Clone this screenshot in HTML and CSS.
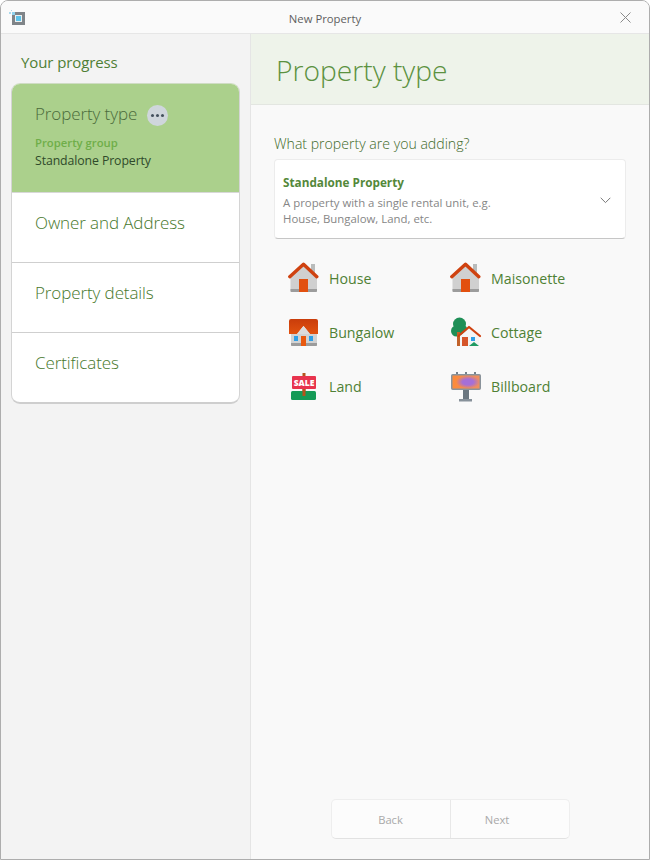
FILE: index.html
```html
<!DOCTYPE html>
<html lang="en">
<head>
<meta charset="utf-8">
<title>New Property</title>
<link rel="stylesheet" href="styles.css">
</head>
<body>
<div class="window">
  <header class="titlebar">
    <svg class="app-icon" width="18" height="16" viewBox="0 0 18 16"><rect x="3" y="2" width="13" height="13" fill="#7f8488"/><rect x="6" y="5" width="7" height="7" fill="#e9eef0"/><rect x="7" y="6" width="5" height="5" fill="#5cc3ea"/><rect x="0" y="2" width="2" height="2" fill="#a9d8ec"/><rect x="2" y="0" width="1" height="1" fill="#a9d8ec"/><rect x="3" y="2" width="3" height="3" fill="#8fd2ee"/></svg>
    <span class="title">New Property</span>
    <svg class="close" width="11" height="11" viewBox="0 0 11 11"><path d="M.5.5l10 10M10.500.5l-10 10" stroke="#8a8a8a" stroke-width="1" fill="none"/></svg>
  </header>
  <div class="body">
    <aside class="sidebar">
      <div class="progress-label">Your progress</div>
      <nav class="steps">
        <div class="step step-active">
          <div class="step-head"><span class="step-name">Property type</span><span class="dots"><i></i><i></i><i></i></span></div>
          <div class="step-sub">Property group</div>
          <div class="step-value">Standalone Property</div>
        </div>
        <div class="step"><span class="step-name">Owner and Address</span></div>
        <div class="step"><span class="step-name">Property details</span></div>
        <div class="step step-last"><span class="step-name">Certificates</span></div>
      </nav>
    </aside>
    <main class="main">
      <div class="page-head">Property type</div>
      <div class="content">
        <div class="question">What property are you adding?</div>
        <div class="select">
          <div>
            <div class="select-title">Standalone Property</div>
            <div class="select-desc">A property with a single rental unit, e.g.<br>House, Bungalow, Land, etc.</div>
          </div>
          <svg class="chevron" width="11" height="7" viewBox="0 0 11 7"><path d="M.7.8l4.800 4.800L10.300.8" stroke="#777" fill="none"/></svg>
        </div>
        <div class="types">
          <div class="type">
            <svg class="type-icon" width="32" height="32" viewBox="0 0 32 32"><path d="M23 2h4v10h-4z" fill="#b9bcbc"/><path d="M2.500 15L15.500 3 29 15v14a1 1 0 0 1-1 1H3.500a1 1 0 0 1-1-1z" fill="#d0d0d0"/><path d="M2.500 27H29v2a1 1 0 0 1-1 1H3.500a1 1 0 0 1-1-1z" fill="#9c9c9c"/><path d="M11 17h9v13h-9z" fill="#e2500f"/><path d="M1.800 14.700L15.500 2.200l13.300 12.500" stroke="#cf4210" stroke-width="3.400" fill="none" stroke-linecap="round" stroke-linejoin="round"/></svg>
            <span>House</span>
          </div>
          <div class="type">
            <svg class="type-icon" width="32" height="32" viewBox="0 0 32 32"><path d="M23 2h4v10h-4z" fill="#b9bcbc"/><path d="M2.500 15L15.500 3 29 15v14a1 1 0 0 1-1 1H3.500a1 1 0 0 1-1-1z" fill="#d0d0d0"/><path d="M2.500 27H29v2a1 1 0 0 1-1 1H3.500a1 1 0 0 1-1-1z" fill="#9c9c9c"/><path d="M11 17h9v13h-9z" fill="#e2500f"/><path d="M1.800 14.700L15.500 2.200l13.300 12.500" stroke="#cf4210" stroke-width="3.400" fill="none" stroke-linecap="round" stroke-linejoin="round"/></svg>
            <span>Maisonette</span>
          </div>
          <div class="type">
            <svg class="type-icon" width="32" height="32" viewBox="0 0 32 32"><defs><linearGradient id="roof" x1="0" y1="0" x2="0" y2="1"><stop offset="0" stop-color="#c93d0b"/><stop offset="1" stop-color="#e2520f"/></linearGradient></defs><path d="M3 15h26v15H3z" fill="#d2d2d2"/><path d="M3 27h26v2a1 1 0 0 1-1 1H4a1 1 0 0 1-1-1z" fill="#9c9c9c"/><path d="M1 5a2 2 0 0 1 2-2h25a2 2 0 0 1 2 2v13h-8l-6.500-8L9 18H1z" fill="url(#roof)"/><path d="M9 18l6.500-8 6.500 8z" fill="#dcdcdc"/><path d="M13 20h5v10h-5z" fill="#e8590f"/><path d="M6 20h4v5H6zM21 20h4v5h-4z" fill="#2f9fe6"/></svg>
            <span>Bungalow</span>
          </div>
          <div class="type">
            <svg class="type-icon" width="32" height="32" viewBox="0 0 32 32"><circle cx="9.500" cy="8" r="6.500" fill="#1f8f57"/><circle cx="6.500" cy="15" r="5.500" fill="#1f8f57"/><circle cx="12.500" cy="14" r="5" fill="#1f8f57"/><path d="M7 16h3v14H7z" fill="#c1622a"/><path d="M10 20l9-8 10 8v10H10z" fill="#f4f4f4"/><path d="M12 21h6v9h-6z" fill="#d5552a"/><path d="M21 21h4v4h-4z" fill="#2f9fe6"/><path d="M19 30l5-4 5 4z" fill="#1f9a62"/><path d="M8.500 20L19 11l11 9" stroke="#cf4210" stroke-width="2.200" fill="none" stroke-linecap="round" stroke-linejoin="round"/></svg>
            <span>Cottage</span>
          </div>
          <div class="type">
            <svg class="type-icon" width="32" height="32" viewBox="0 0 32 32"><path d="M14.500 3h3v23h-3z" fill="#b5541c"/><rect x="3" y="21" width="25" height="9" rx="1.500" fill="#159a56"/><path d="M14.500 19h3v7h-3z" fill="#b5541c"/><rect x="4" y="6" width="24" height="13" rx="1" fill="#e8344e"/><text x="16" y="15.500" class="sale">SALE</text></svg>
            <span>Land</span>
          </div>
          <div class="type">
            <svg class="type-icon" width="32" height="32" viewBox="0 0 32 32"><defs><linearGradient id="ad" x1="0" y1="0" x2="1" y2="0"><stop offset="0" stop-color="#fd8a38"/><stop offset="1" stop-color="#ee8f62"/></linearGradient><radialGradient id="glow"><stop offset=".45" stop-color="#a56fd8"/><stop offset="1" stop-color="#a56fd8" stop-opacity="0"/></radialGradient></defs><path d="M6 2h2v3H6zM15 2h2v3h-2zM24 2h2v3h-2z" fill="#74808a"/><rect x="1.750" y="4.750" width="28.500" height="14.500" rx="1" fill="url(#ad)" stroke="#8a939b" stroke-width="1.500"/><ellipse cx="18" cy="12" rx="12" ry="6.500" fill="url(#glow)"/><path d="M13 20h6v9h-6z" fill="#6b7780"/><path d="M9 29h13v2.500H9z" fill="#87919a"/></svg>
            <span>Billboard</span>
          </div>
        </div>
        <div class="footer">
          <div class="nav-buttons"><div class="nav-btn nav-btn-back">Back</div><div class="nav-btn nav-btn-next">Next</div></div>
        </div>
      </div>
    </main>
  </div>
</div>
</body>
</html>
```
FILE: styles.css
```css
* { box-sizing: border-box; }
html, body { margin: 0; padding: 0; height: 860px; background: #fff; overflow: hidden; }
body { font-family: "Open Sans", "Noto Sans", sans-serif; color: #333; }
.window { height: 860px; border: 1px solid #adadad; border-radius: 8px 8px 0 0; overflow: hidden; display: flex; flex-direction: column; background: #f9f9f9; }
.titlebar { height: 33px; flex: none; position: relative; display: flex; align-items: center; justify-content: center; background: #fafafa; border-bottom: 1px solid #e6e6e6; }
.app-icon { position: absolute; left: 8px; top: 9px; }
.title { font-size: 11.300px; color: #5f5f5f; position: relative; top: 1px; }
.close { position: absolute; right: 18px; top: 11px; }
.body { flex: 1; display: flex; min-height: 0; }
.sidebar { width: 250px; flex: none; background: #f3f3f3; border-right: 1px solid #e5e5e5; padding: 0 10px; }
.progress-label { font-size: 15px; color: #4f7f35; padding: 18px 0 0 10px; height: 49px; line-height: 21px; letter-spacing: -.1px; }
.steps { background: #fff; border: 1px solid #d4d4d4; border-top-color: #cfdcc4; border-bottom: 2px solid #cecece; border-radius: 9px; overflow: hidden; }
.step { height: 70px; padding: 18px 23px 0; border-bottom: 1px solid #cfcfcf; }
.step-last { border-bottom: none; height: 69px; }
.step-name { font-size: 17px; font-weight: 300; line-height: 24px; color: #47782c; letter-spacing: -.1px; }
.step-active { height: 109px; background: #abd08c; border-bottom-color: #d8d8d8; }
.step-head { display: flex; align-items: center; height: 24px; gap: 10px; }
.step-active .step-name { color: #4a6b3b; }
.dots { width: 21px; height: 21px; border-radius: 50%; background: #cfd6dc; display: flex; align-items: center; justify-content: center; gap: 2px; margin-top: 3px; }
.dots i { width: 3px; height: 3px; border-radius: 50%; background: #44515e; }
.step-sub { font-size: 11.300px; font-weight: 600; color: #6fae49; margin-top: 8px; line-height: 17px; }
.step-value { font-size: 12.300px; color: #2f4a2a; line-height: 17px; margin-top: 1px; letter-spacing: -.1px; }
.main { flex: 1; min-width: 0; display: flex; flex-direction: column; }
.page-head { height: 71px; flex: none; background: #eef3ea; border-bottom: 1px solid #e3e6e1; font-size: 28.200px; font-weight: 300; color: #5b9140; padding: 14px 0 0 25px; line-height: 44px; }
.content { flex: 1; padding: 29px 23px 20px 23px; display: flex; flex-direction: column; }
.question { font-size: 14.100px; font-weight: 300; color: #3f6a2a; line-height: 20px; }
.select { margin-top: 5px; height: 80px; background: #fff; border: 1px solid #ececec; border-bottom: 1px solid #c6c6c6; border-radius: 4px; padding: 14px 14px 0 8px; display: flex; justify-content: space-between; }
.select-title { font-size: 11.750px; font-weight: 700; color: #54883a; line-height: 17px; }
.select-desc { font-size: 11.400px; color: #868686; line-height: 16px; margin-top: 4px; }
.chevron { margin-top: 23px; }
.types { display: grid; grid-template-columns: 162px 162px; grid-auto-rows: 54px; margin: 12px 0 0 14px; }
.type { display: flex; align-items: center; gap: 9px; font-size: 14.200px; color: #4f8135; height: 54px; }
.type-icon { flex: none; }
.sale { font: 800 8.500px "Open Sans", sans-serif; fill: #fff; text-anchor: middle; }
.footer { margin-top: auto; display: flex; justify-content: center; }
.nav-buttons { display: flex; width: 239px; height: 40px; background: #fcfcfc; border: 1px solid #eeeeee; border-bottom-color: #e2e2e2; border-radius: 5px; }
.nav-btn { display: flex; align-items: center; justify-content: center; font-size: 11.200px; color: #a9a9a9; padding-top: 1px; }
.nav-btn-back { width: 119px; flex: none; border-right: 1px solid #e8e8e8; }
.nav-btn-next { flex: 1; padding-right: 25px; }
```
